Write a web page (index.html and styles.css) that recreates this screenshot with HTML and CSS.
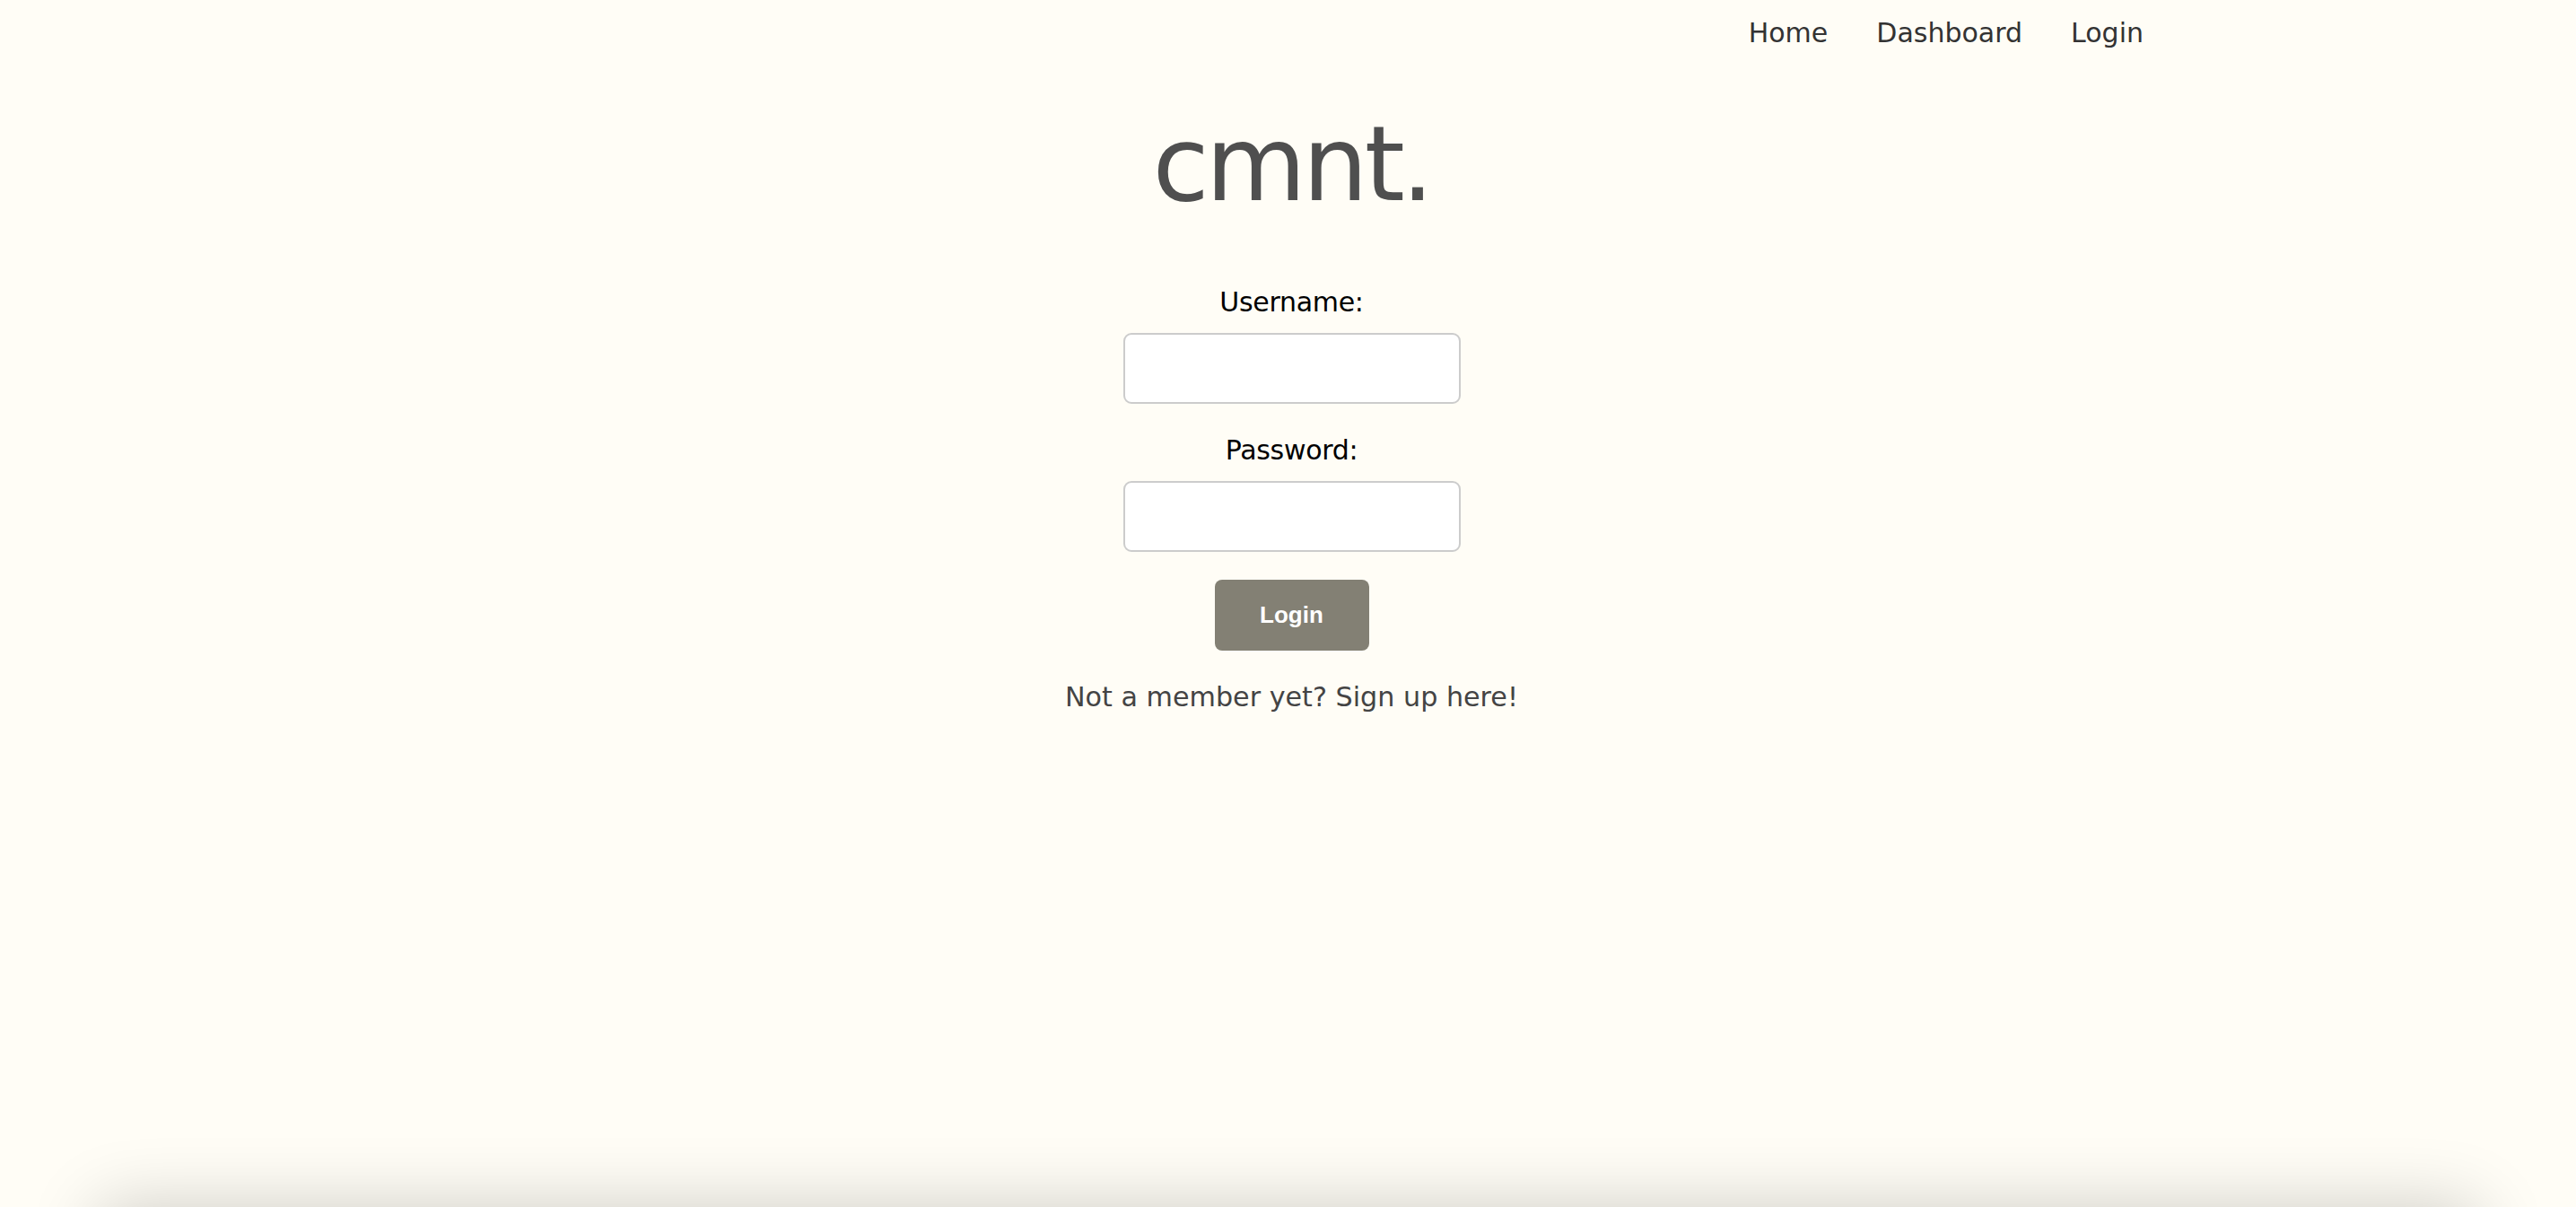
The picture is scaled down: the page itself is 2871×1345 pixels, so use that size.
FILE: index.html
```html
<!DOCTYPE html>
<html lang="en">
<head>
<meta charset="utf-8">
<title>cmnt. — Login</title>
<link rel="stylesheet" href="styles.css">
</head>
<body>
<div class="page">
  <nav class="nav">
    <a class="nav-link" href="#">Home</a>
    <a class="nav-link" href="#">Dashboard</a>
    <a class="nav-link" href="#">Login</a>
  </nav>
  <main class="main">
    <h1 class="brand">cmnt.</h1>
    <form class="login-form">
      <label class="field-label" for="username">Username:</label>
      <input class="field-input" id="username" type="text">
      <label class="field-label field-label-second" for="password">Password:</label>
      <input class="field-input" id="password" type="password">
      <button class="login-button" type="button">Login</button>
    </form>
    <p class="signup">Not a member yet? Sign up here!</p>
  </main>
</div>
<footer class="footer"></footer>
</body>
</html>
```
FILE: styles.css
```css
html, body {
  margin: 0;
  padding: 0;
  background: #fffdf6;
  overflow: hidden;
}

body {
  font-family: "DejaVu Sans", "Liberation Sans", sans-serif;
}

.page {
  height: 1345px;
}

.nav {
  display: flex;
  justify-content: flex-end;
  gap: 54px;
  padding: 17px 482px 0 0;
  font-size: 30px;
  line-height: 40px;
}

.nav-link {
  color: #333333;
  text-decoration: none;
}

.main {
  display: flex;
  flex-direction: column;
  align-items: center;
  padding-left: 8px;
}

.brand {
  margin: 69px 0 0 0;
  font-size: 115px;
  line-height: 115px;
  font-weight: normal;
  letter-spacing: -4px;
  color: #4f4f4f;
}

.login-form {
  display: flex;
  flex-direction: column;
  align-items: center;
  margin-top: 76px;
}

.field-label {
  font-size: 30px;
  line-height: 40px;
  color: #000000;
  margin-bottom: 14px;
  letter-spacing: -0.3px;
}

.field-label-second {
  margin-top: 32px;
}

.field-input {
  box-sizing: border-box;
  width: 376px;
  height: 79px;
  border: 2px solid #cccccc;
  border-radius: 9px;
  background: #ffffff;
  margin: 0;
  padding: 0 16px;
  font-size: 26px;
}

.login-button {
  margin-top: 31px;
  width: 172px;
  height: 79px;
  border: none;
  border-radius: 8px;
  background: #838074;
  color: #ffffff;
  font-family: "Liberation Sans", Arial, sans-serif;
  font-weight: bold;
  font-size: 26px;
  padding: 0;
}

.signup {
  margin: 32px 0 0 0;
  font-size: 30.2px;
  line-height: 40px;
  color: #444444;
}

.footer {
  height: 200px;
  margin: 0 110px;
  background: #fffdf6;
  box-shadow: 0 0 80px rgba(0, 0, 0, 0.2);
}
```
